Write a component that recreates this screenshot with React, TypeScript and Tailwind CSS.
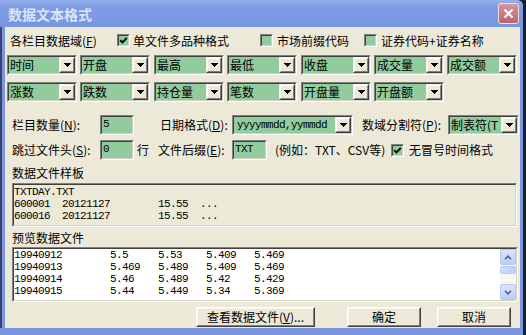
import React from "react";

const CJK = "font-['Noto_Sans_CJK_SC','Noto_Sans',sans-serif]";
const MONO = "font-['Liberation_Mono','Noto_Sans_CJK_SC',monospace] text-[11px] tracking-[-0.6px]";

function Sunken({ outer, inner, children }: { outer: string; inner: string; children?: React.ReactNode }) {
  return (
    <div className={`shrink-0 border border-t-[#808080] border-l-[#808080] border-b-white border-r-white ${outer}`}>
      <div className={`h-full w-full border border-t-[#404040] border-l-[#404040] border-b-[#d4d0c8] border-r-[#d4d0c8] ${inner}`}>
        {children}
      </div>
    </div>
  );
}

function Arrow() {
  return (
    <div className="w-[16px] h-[16px] shrink-0 border border-t-[#f4f3ee] border-l-[#f4f3ee] border-b-[#404040] border-r-[#404040]">
      <div className="w-full h-full border border-t-white border-l-white border-b-[#808080] border-r-[#808080] bg-[#ece9d8] flex items-center justify-center">
        <svg width="7" height="4" viewBox="0 0 7 4" shapeRendering="crispEdges">
          <rect x="0" y="0" width="7" height="1" fill="#000" />
          <rect x="1" y="1" width="5" height="1" fill="#000" />
          <rect x="2" y="2" width="3" height="1" fill="#000" />
          <rect x="3" y="3" width="1" height="1" fill="#000" />
        </svg>
      </div>
    </div>
  );
}

function Combo({ w, children, mono }: { w: string; children: React.ReactNode; mono?: boolean }) {
  return (
    <Sunken outer={`${w} h-[20px]`} inner="flex bg-[#92cb9c]">
      <div
        className={`flex-1 min-w-0 overflow-hidden whitespace-nowrap pl-[1px] leading-[16px] text-black ${
          mono ? MONO + " pl-[3px]" : "text-[12px]"
        }`}
      >
        {children}
      </div>
      <Arrow />
    </Sunken>
  );
}

function Check({ checked }: { checked?: boolean }) {
  return (
    <Sunken outer="w-[13px] h-[13px]" inner="bg-[#92cb9c] flex items-center justify-center">
      {checked && (
        <svg width="9" height="9" viewBox="0 0 9 9">
          <path d="M1.2 4.2 L3.4 6.4 L7.8 2" stroke="#000" strokeWidth="1.8" fill="none" />
        </svg>
      )}
    </Sunken>
  );
}

function Input({ w, text }: { w: string; text: string }) {
  return (
    <Sunken outer={`${w} h-[20px]`} inner="bg-[#92cb9c]">
      <div className={`${MONO} pl-[1px] pt-[1px] leading-[12px] text-black`}>{text}</div>
    </Sunken>
  );
}

function Button({ w, children }: { w: string; children: React.ReactNode }) {
  return (
    <div className={`${w} h-[20px] shrink-0 border border-t-white border-l-white border-b-[#404040] border-r-[#404040]`}>
      <div className="w-full h-full border border-t-[#f4f3ee] border-l-[#f4f3ee] border-b-[#808080] border-r-[#808080] bg-[#ece9d8] flex items-center justify-center text-[12px] leading-[14px] text-black whitespace-nowrap">
        {children}
      </div>
    </div>
  );
}

function U({ c }: { c: string }) {
  return <span className="underline underline-offset-[1px]">{c}</span>;
}

function ScrollBtn({ up }: { up?: boolean }) {
  return (
    <div className="w-[16px] h-[16px] rounded-[2px] border border-[#b7c9f3] bg-linear-to-b from-[#dbe6fd] to-[#b9cdf9] flex items-center justify-center">
      <svg width="8" height="5" viewBox="0 0 8 5">
        <path d={up ? "M1 4.2 L4 1.2 L7 4.2" : "M1 0.8 L4 3.8 L7 0.8"} stroke="#4d6185" strokeWidth="1.6" fill="none" />
      </svg>
    </div>
  );
}

const sampleLines = [
  "TXTDAY.TXT",
  "600001  20121127        15.55  ...",
  "600016  20121127        15.55  ...",
];

const previewLines = [
  "19940912        5.5     5.53    5.409   5.469",
  "19940913        5.469   5.489   5.409   5.469",
  "19940914        5.46    5.489   5.42    5.429",
  "19940915        5.44    5.449   5.34    5.369",
];

export default function App() {
  const row1 = ["时间", "开盘", "最高", "最低", "收盘", "成交量", "成交额"];
  const row2 = ["涨数", "跌数", "持仓量", "笔数", "开盘量", "开盘额"];
  const gaps = ["ml-0", "ml-[3px]", "ml-[4px]", "ml-[3px]", "ml-[4px]", "ml-[3px]", "ml-[3px]"];
  return (
    <div className={`w-[526px] h-[335px] bg-[#1c1c2a] overflow-hidden ${CJK}`}>
      <div className="w-[523px] h-[335px] flex flex-col bg-[#7b95de] rounded-tr-[6px]">
        {/* title bar */}
        <div className="h-[27px] shrink-0 flex items-center bg-[linear-gradient(180deg,#95aeee_0%,#7e9be3_30%,#7895e0_100%)] rounded-tr-[6px]">
          <div className="pl-[8px] text-[14px] font-bold leading-[16px] text-[#dbe4f8] tracking-[0px]">数据文本格式</div>
          <div className="ml-auto mr-[4px] w-[21px] h-[21px] rounded-[3px] border border-[#eedde2] bg-linear-to-b from-[#d8959f] to-[#b9646f] flex items-center justify-center">
            <svg width="11" height="11" viewBox="0 0 11 11">
              <path d="M1.5 1.5 L9.5 9.5 M9.5 1.5 L1.5 9.5" stroke="#fff" strokeWidth="2.2" />
            </svg>
          </div>
        </div>
        {/* body */}
        <div className="flex flex-1 min-h-0 pb-[7px]">
          <div className="w-[2px] bg-[#3b4270]" />
          <div className="w-[3px] bg-[#7b95de]" />
          <div className="flex-1 bg-[#ece9d8] flex flex-col text-[12px] text-black">
            {/* row 1 */}
            <div className="mt-[7px] h-[13px] flex items-center pl-[5px] leading-[13px] whitespace-nowrap">
              <div className="w-[107px]">各栏目数据域(<U c="F" />)</div>
              <Check checked />
              <div className="ml-[3px] w-[127px]">单文件多品种格式</div>
              <Check />
              <div className="ml-[4px] w-[87px]">市场前缀代码</div>
              <Check />
              <div className="ml-[4px]">证券代码+证券名称</div>
            </div>
            {/* combos */}
            <div className="mt-[8px] flex pl-[2px]">
              {row1.map((t, i) => (
                <div key={t} className={gaps[i]}>
                  <Combo w="w-[70px]">{t}</Combo>
                </div>
              ))}
            </div>
            <div className="mt-[7px] flex pl-[2px]">
              {row2.map((t, i) => (
                <div key={t} className={gaps[i]}>
                  <Combo w="w-[70px]">{t}</Combo>
                </div>
              ))}
            </div>
            {/* row 3 */}
            <div className="mt-[13px] h-[20px] flex items-center pl-[7px] whitespace-nowrap">
              <div className="w-[88px]">栏目数量(<U c="N" />):</div>
              <Input w="w-[34px]" text="5" />
              <div className="ml-[26px] w-[72px]">日期格式(<U c="D" />):</div>
              <Combo w="w-[121px]" mono>
                yyyymmdd,yymmdd
              </Combo>
              <div className="ml-[9px] w-[86px]">数域分割符(<U c="P" />):</div>
              <Combo w="w-[71px]">制表符(T</Combo>
            </div>
            {/* row 4 */}
            <div className="mt-[5px] h-[20px] flex items-center pl-[7px] whitespace-nowrap">
              <div className="w-[88px]">跳过文件头(<U c="S" />):</div>
              <Input w="w-[34px]" text="0" />
              <div className="ml-[3px] w-[12px]">行</div>
              <div className="ml-[9px] w-[74px]">文件后缀(<U c="E" />):</div>
              <Input w="w-[35px]" text="TXT" />
              <div className="ml-[8px] w-[116px]">(例如：TXT、CSV等)</div>
              <Check checked />
              <div className="ml-[5px]">无冒号时间格式</div>
            </div>
            {/* sample */}
            <div className="mt-[7px] pl-[7px] leading-[12px]">数据文件样板</div>
            <div className="mt-[4px] ml-[7px]">
              <Sunken outer="w-[505px] h-[44px]" inner="bg-[#ece9d8] pt-[1px]">
                {sampleLines.map((l) => (
                  <div key={l} className={`${MONO} leading-[12px] whitespace-pre`}>
                    {l}
                  </div>
                ))}
              </Sunken>
            </div>
            {/* preview */}
            <div className="mt-[5px] pl-[7px] leading-[12px]">预览数据文件</div>
            <div className="mt-[3px] ml-[7px]">
              <Sunken outer="w-[506px] h-[55px]" inner="bg-white flex">
                <div className="flex-1">
                  {previewLines.map((l) => (
                    <div key={l} className={`${MONO} leading-[12px] whitespace-pre`}>
                      {l}
                    </div>
                  ))}
                </div>
                <div className="w-[16px] flex flex-col bg-[#f7f6f1]">
                  <ScrollBtn up />
                  <div className="mt-[1px] h-[8px] rounded-[2px] border border-[#b7c9f3] bg-linear-to-r from-[#cfdcfb] to-[#bccff9]" />
                  <div className="flex-1" />
                  <ScrollBtn />
                </div>
              </Sunken>
            </div>
            {/* buttons */}
            <div className="mt-[5px] flex pl-[191px]">
              <Button w="w-[119px]">
                查看数据文件(<U c="V" />)...
              </Button>
              <div className="ml-[32px]">
                <Button w="w-[74px]">确定</Button>
              </div>
              <div className="ml-[16px]">
                <Button w="w-[74px]">取消</Button>
              </div>
            </div>
          </div>
          <div className="w-[3px] bg-[#7b95de]" />
        </div>
      </div>
    </div>
  );
}
